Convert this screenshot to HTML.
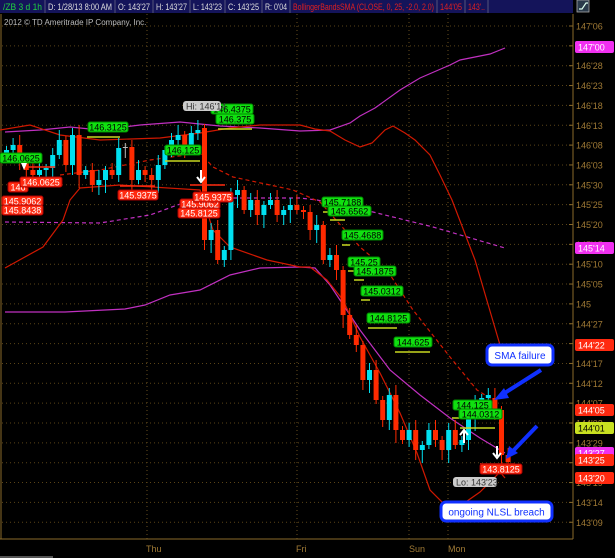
<!DOCTYPE html>
<html><head><meta charset="utf-8">
<style>
html,body{margin:0;padding:0;background:#000;width:615px;height:558px;overflow:hidden}
svg{display:block}
text{font-family:"Liberation Sans",sans-serif}
</style></head><body>
<svg id="s" width="615" height="558" xmlns="http://www.w3.org/2000/svg">
<rect width="615" height="558" fill="#000"/>
<g id="grid"></g>
<line x1="1" y1="14" x2="1" y2="539" stroke="#8a6a2a"/>
<line x1="573" y1="14" x2="573" y2="539" stroke="#8a6a2a"/>
<line x1="0" y1="539" x2="573" y2="539" stroke="#8a6a2a"/>
<g id="ax" font-size="9" fill="#a07a35"></g>
<text x="146" y="552" font-size="9" fill="#a07a35">Thu</text>
<text x="296" y="552" font-size="9" fill="#a07a35">Fri</text>
<text x="409" y="552" font-size="9" fill="#a07a35">Sun</text>
<text x="448" y="552" font-size="9" fill="#a07a35">Mon</text>
<rect x="0" y="556" width="53" height="2" fill="#555"/>
<text x="4" y="25" font-size="8" fill="#bbb">2012 © TD Ameritrade IP Company, Inc.</text>

<polyline fill="none" stroke="#c030c0" stroke-width="1.2" points="5,132 40,130 70,127 100,130 140,125 180,122 220,126 260,128 300,131 330,130 350,123 360,116 375,108 400,90 420,78 450,65 460,60 490,54 505,48"/>
<polyline fill="none" stroke="#c030c0" stroke-width="1.2" stroke-dasharray="4,3" points="5,222 100,223 150,215 183,203 233,198 300,198 317,200 373,212 433,227 505,248"/>
<polyline fill="none" stroke="#c030c0" stroke-width="1.2" points="5,312 65,312 125,309 145,305 170,295 200,290 230,275 260,268 300,267 315,268 330,285 360,330 390,370 420,395 450,418 480,438 505,453"/>
<polyline fill="none" stroke="#d01800" stroke-width="1.2" points="0,130 30,125 60,135 100,140 160,138 200,133 230,128 260,125 300,125 315,129 330,131 345,140 360,147 372,143 385,130 393,126 405,133 415,140 430,155 440,175 452,200 475,260 500,345"/>
<polyline fill="none" stroke="#d01800" stroke-width="1.2" points="5,268 43,247 63,220 70,200 80,188 120,185 200,190 213,230 230,247 267,260 300,267 310,267 327,280 343,300 360,337 380,373 400,413 417,453 430,490 445,505 460,506 480,492 500,472 505,478"/>
<polyline fill="none" stroke="#d01800" stroke-width="1.2" stroke-dasharray="4,3" points="60,175 100,170 150,160 200,153 213,167 233,177 293,190 320,202 360,247 387,270 413,310 450,357 477,390 493,400"/>

<g id="c"></g>
<g id="lab" font-size="9"></g>

<rect x="0" y="0" width="573" height="13" fill="#14145a"/>
<g id="hdr" font-size="9"></g>
<rect x="577" y="0" width="12" height="12" fill="#2a3a4a" stroke="#aaa" stroke-width="0.8"/>
<path d="M579,9 L582,9 L586,3 L588,3" stroke="#dfe" fill="none" stroke-width="1.2"/>

<line x1="541" y1="370" x2="500" y2="396" stroke="#1030ff" stroke-width="4"/>
<polygon points="494,400 504,388 509,398" fill="#1030ff"/>
<line x1="537" y1="426" x2="512" y2="452" stroke="#1030ff" stroke-width="4"/>
<polygon points="506,459 509,446 518,453" fill="#1030ff"/>
<rect x="487" y="345" width="66" height="20" rx="5" fill="#fff" stroke="#1030ff" stroke-width="3"/>
<text x="520" y="359" font-size="10" fill="#1030ff" text-anchor="middle">SMA failure</text>
<rect x="441" y="502" width="111" height="19" rx="5" fill="#fff" stroke="#1030ff" stroke-width="3"/>
<text x="496.5" y="515.5" font-size="10" fill="#1030ff" text-anchor="middle">ongoing NLSL breach</text>
</svg>
<script>
var NS="http://www.w3.org/2000/svg";
function el(p,t,a,txt){var e=document.createElementNS(NS,t);for(var k in a)e.setAttribute(k,a[k]);if(txt!=null)e.textContent=txt;document.getElementById(p).appendChild(e);return e;}
[147,297,409,448].forEach(function(x){el("grid","line",{x1:x,y1:14,x2:x,y2:539,stroke:"#6a5020","stroke-dasharray":"1,3"});});
var labs=["147'06","147'01","146'28","146'23","146'18","146'13","146'08","146'03","145'30","145'25","145'20","145'15","145'10","145'05","145","144'27","144'22","144'17","144'12","144'07","144'02","143'29","143'24","143'19","143'14","143'09"];
labs.forEach(function(l,i){var y=26+i*19.85;
 el("grid","line",{x1:2,y1:y,x2:572,y2:y,stroke:"#5a4418","stroke-dasharray":"1,3"});
 el("grid","line",{x1:569,y1:y,x2:573,y2:y,stroke:"#8a6a2a"});
 el("ax","text",{x:576,y:y+3.5},l);});
function rl(y,t,bg,fg){el("ax","rect",{x:575,y:y-6,width:39,height:12,rx:2,fill:bg});el("ax","text",{x:578,y:y+3.5,fill:fg},t);}
rl(47,"147'00","#f030f0","#fff");rl(248,"145'14","#f030f0","#fff");rl(345,"144'22","#ff2a10","#fff");
rl(410,"144'05","#ff2a10","#fff");rl(428,"144'01","#c8e020","#000");rl(453,"143'27","#f030f0","#fff");
rl(460,"143'25","#ff2a10","#fff");rl(478,"143'20","#ff2a10","#fff");
var cl=[150,145,160,170,175,170,168,155,140,165,135,175,170,185,180,170,175,148,147,180,170,175,180,165,150,140,135,145,133,130,240,230,260,250,195,190,210,200,215,205,200,215,210,205,210,212,230,225,260,255,270,315,335,345,380,370,400,420,395,430,440,430,450,445,430,440,450,430,445,440,418,405,398,395,410,455,462];
var prev=155;
cl.forEach(function(c,i){var x=4+i*6.6;var o=prev;if(i==30)o=128;if(i==75)o=410;if(i==74)o=398;
 var top=Math.min(o,c),bot=Math.max(o,c);var col=c>o?"#ff2a00":(c<o?"#00e0f0":"#bbb");
 if(Math.abs(c-o)<2){col="#bbb";bot=top+1;}
 el("c","line",{x1:x+2.5,y1:top-4-(i%3)*3,x2:x+2.5,y2:bot+4+(i%4)*3,stroke:col});
 el("c","rect",{x:x,y:top,width:5,height:Math.max(1,bot-top),fill:col});
 prev=c;});
function g(x,y,t,w){el("lab","rect",{x:x,y:y,width:w,height:10,rx:2,fill:"#10e010",stroke:"#080"});el("lab","text",{x:x+w/2,y:y+8.3,fill:"#000","text-anchor":"middle"},t);}
function r(x,y,t,w){el("lab","rect",{x:x,y:y,width:w,height:10,rx:2,fill:"#ff2a10",stroke:"#a00"});el("lab","text",{x:x+w/2,y:y+8.3,fill:"#fff","text-anchor":"middle"},t);}
function hl(x1,x2,y,c){el("lab","line",{x1:x1,y1:y,x2:x2,y2:y,stroke:c,"stroke-width":1.5});}
hl(87,120,137,"#c8d820");hl(218,252,129,"#c8d820");hl(165,200,161,"#c8d820");hl(28,55,167,"#ff2a10");
hl(120,155,186,"#ff2a10");hl(190,225,185,"#ff2a10");
hl(323,340,212,"#c8d820");hl(330,345,220,"#c8d820");hl(342,350,245,"#c8d820");hl(348,360,271,"#c8d820");hl(354,364,280,"#c8d820");hl(361,370,300,"#c8d820");hl(368,397,328,"#c8d820");hl(395,430,352,"#c8d820");
hl(452,470,418,"#c8d820");hl(460,495,428,"#c8d820");hl(480,515,464,"#ff2a10");
g(88,122,"146.3125",40);g(211,104,"146.4375",42);g(216,114,"146.375",38);
el("lab","rect",{x:183,y:101,width:38,height:10,rx:3,fill:"#ccc"});el("lab","text",{x:186,y:109.3,fill:"#333"},"Hi: 146'14");
g(165,145,"146.125",36);g(0,153,"146.0625",42);
el("lab","polygon",{points:"21,163 27,163 24,170",fill:"#fff"});
r(8,182,"146",20);r(2,196,"145.9062",41);r(2,205,"145.8438",41);r(20,177,"146.0625",42);
r(118,190,"145.9375",40);r(180,199,"145.9062",40);r(193,192,"145.9375",40);r(178,208,"145.8125",42);
g(322,197,"145.7188",41);g(328,206,"145.6562",43);g(342,230,"145.4688",41);g(348,257,"145.25",32);g(354,266,"145.1875",42);
g(361,286,"145.0312",42);g(367,313,"144.8125",43);g(394,337,"144.625",38);g(453,400,"144.125",39);g(459,409,"144.0312",43);
r(480,464,"143.8125",42);
el("lab","rect",{x:453,y:477,width:44,height:10,rx:3,fill:"#ccc"});el("lab","text",{x:456,y:485.3,fill:"#333"},"Lo: 143'23");
el("lab","path",{d:"M201,170 v10 M197,177 l4,5 l4,-5",stroke:"#fff","stroke-width":2,fill:"none"});
el("lab","path",{d:"M464,443 v-12 M460,435 l4,-5 l4,5",stroke:"#fff","stroke-width":2,fill:"none"});
el("lab","path",{d:"M497,446 v10 M493,453 l4,5 l4,-5",stroke:"#fff","stroke-width":2,fill:"none"});
var cells=[[0,45,"/ZB 3 d 1h","#20d040"],[45,115,"D: 1/28/13 8:00 AM","#ddd"],[115,153,"O: 143'27","#ddd"],[153,190,"H: 143'27","#ddd"],[190,225,"L: 143'23","#ddd"],[225,262,"C: 143'25","#ddd"],[262,290,"R: 0'04","#ddd"],[290,437,"BollingerBandsSMA (CLOSE, 0, 25, -2.0, 2.0)","#e02020"],[437,465,"144'05","#e02020"],[465,488,"143'..","#e02020"]];
cells.forEach(function(c){el("hdr","line",{x1:c[1],y1:0,x2:c[1],y2:13,stroke:"#55557a"});
 el("hdr","text",{x:c[0]+3,y:10,fill:c[3],textLength:(c[1]-c[0]-6),lengthAdjust:"spacingAndGlyphs"},c[2]);});
</script>
</body></html>
